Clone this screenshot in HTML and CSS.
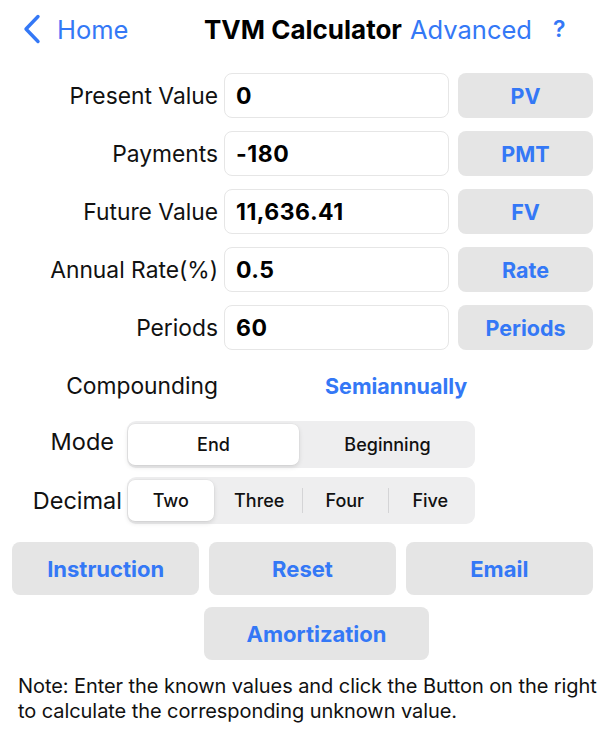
FILE: index.html
```html
<!DOCTYPE html>
<html lang="en">
<head>
<meta charset="utf-8">
<title>TVM Calculator</title>
<link rel="stylesheet" href="styles.css">
</head>
<body>
<header class="nav">
  <a class="nav-back" href="#">
    <svg class="nav-chevron" viewBox="0 0 18 30" width="18" height="30" aria-hidden="true">
      <path d="M15 2.5 L3 15 L15 27.5" fill="none" stroke="currentColor" stroke-width="3.4" stroke-linecap="round" stroke-linejoin="round"/>
    </svg>
    <span>Home</span>
  </a>
  <h1 class="nav-title">TVM Calculator</h1>
  <a class="nav-link" href="#">Advanced</a>
  <a class="nav-help" href="#">?</a>
</header>

<main class="calc">
  <section class="fields">
    <label class="field-label">Present Value</label>
    <div class="field-input">0</div>
    <button class="btn btn-calc">PV</button>

    <label class="field-label">Payments</label>
    <div class="field-input">-180</div>
    <button class="btn btn-calc">PMT</button>

    <label class="field-label">Future Value</label>
    <div class="field-input">11,636.41</div>
    <button class="btn btn-calc">FV</button>

    <label class="field-label">Annual Rate(%)</label>
    <div class="field-input">0.5</div>
    <button class="btn btn-calc">Rate</button>

    <label class="field-label">Periods</label>
    <div class="field-input">60</div>
    <button class="btn btn-calc">Periods</button>

    <label class="field-label field-label--compound">Compounding</label>
    <div class="compound-value">Semiannually</div>
  </section>

  <section class="options">
    <span class="opt-label opt-label--mode">Mode</span>
    <div class="segmented">
      <span class="seg seg--selected">End</span>
      <span class="seg">Beginning</span>
    </div>

    <span class="opt-label opt-label--decimal">Decimal</span>
    <div class="segmented">
      <span class="seg seg--selected">Two</span>
      <span class="seg">Three</span>
      <span class="seg seg--divided">Four</span>
      <span class="seg seg--divided">Five</span>
    </div>
  </section>

  <section class="actions">
    <button class="btn btn-action">Instruction</button>
    <button class="btn btn-action">Reset</button>
    <button class="btn btn-action">Email</button>
  </section>
  <div class="amort-row">
    <button class="btn btn-action btn-amort">Amortization</button>
  </div>

  <p class="note">Note: Enter the known values and click the Button on the right to calculate the corresponding unknown value.</p>
</main>
</body>
</html>
```
FILE: styles.css
```css
* { box-sizing: border-box; }

html, body {
  margin: 0;
  padding: 0;
  background: #ffffff;
}

body {
  width: 616px;
  font-family: "Inter", "Liberation Sans", sans-serif;
  color: #000;
}

a { text-decoration: none; }

/* Navigation bar */
.nav {
  height: 58px;
  padding-left: 23px;
  display: grid;
  grid-template-columns: 181px 206px 143px auto;
  align-items: center;
}

.nav-back {
  display: flex;
  align-items: center;
  gap: 16px;
  color: #3478f6;
  font-size: 25.5px;
  font-weight: 400;
}

.nav-chevron { display: block; }

.nav-title {
  margin: 0;
  font-size: 26px;
  font-weight: 700;
  white-space: nowrap;
}

.nav-link {
  color: #3478f6;
  font-size: 25.5px;
  font-weight: 400;
  white-space: nowrap;
}

.nav-help {
  color: #3478f6;
  font-size: 23px;
  font-weight: 600;
}

/* Fields */
.fields {
  margin-top: 15px;
  display: grid;
  grid-template-columns: 218px 225px 144px;
  grid-auto-rows: 45px;
  column-gap: 6px;
  row-gap: 13px;
}

.field-label {
  text-align: right;
  align-self: center;
  font-size: 22.8px;
  white-space: nowrap;
  color: #111;
}

.field-input {
  border: 1px solid #e6e6e6;
  border-radius: 8px;
  display: flex;
  align-items: center;
  padding-left: 11px;
  font-size: 23px;
  font-weight: 700;
  letter-spacing: 0.5px;
}

.btn {
  border: none;
  background: #e5e5e5;
  border-radius: 8px;
  color: #3478f6;
  font-family: inherit;
  font-weight: 700;
  padding: 0;
  margin: 0;
}

.btn-calc {
  margin-left: 3px;
  width: 135px;
  font-size: 21.5px;
}

.compound-value {
  grid-column: 2 / 4;
  align-self: center;
  padding-left: 101px;
  color: #3478f6;
  font-size: 21.5px;
  font-weight: 700;
}

/* Options */
.options {
  margin-top: 13px;
  display: grid;
  grid-template-columns: 127px 348px;
  grid-auto-rows: 47px;
  row-gap: 9px;
}

.opt-label {
  align-self: center;
  text-align: right;
  font-size: 23.5px;
  color: #111;
}

.opt-label--mode { padding-right: 13px; padding-bottom: 6px; }
.opt-label--decimal { padding-right: 5px; }

.segmented {
  display: flex;
  background: #eeeeef;
  border-radius: 9px;
  padding: 3px 2px 3px 1px;
}

.seg {
  position: relative;
  flex: 1;
  display: flex;
  align-items: center;
  justify-content: center;
  font-size: 18px;
  font-weight: 500;
  color: #111;
  border-radius: 7px;
}

.seg--selected {
  background: #ffffff;
  margin-right: 3px;
  box-shadow: 0 2px 5px rgba(0, 0, 0, 0.12), 0 0 0 0.5px rgba(0, 0, 0, 0.04);
}

.seg--divided::before {
  content: "";
  position: absolute;
  left: 0;
  top: 8px;
  bottom: 8px;
  width: 1px;
  background: #d4d4d6;
}

/* Actions */
.actions {
  margin-top: 18px;
  padding-left: 12px;
  width: 593px;
  display: grid;
  grid-template-columns: repeat(3, 1fr);
  column-gap: 9.5px;
}

.btn-action {
  height: 53px;
  font-size: 22px;
}

.amort-row {
  margin-top: 12px;
  padding-left: 204px;
}

.btn-amort {
  width: 225px;
}

.note {
  margin: 14px 0 0;
  padding-left: 18px;
  padding-right: 10px;
  font-size: 20px;
  line-height: 25px;
  letter-spacing: -0.07px;
  color: #111;
}
```
